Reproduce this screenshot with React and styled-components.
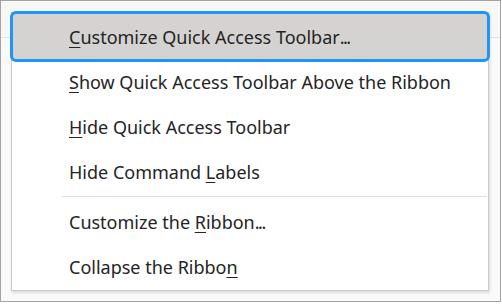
import React from "react";
import styled, { createGlobalStyle } from "styled-components";

const GlobalStyle = createGlobalStyle`
  html, body {
    margin: 0;
    padding: 0;
    background: #ffffff;
  }
`;

const StyledFrame = styled.div`
  box-sizing: border-box;
  width: 501px;
  height: 302px;
  border: 1px solid #a3a3a3;
  background: linear-gradient(
    to bottom,
    #f7f7f7 0px,
    #f7f7f7 36px,
    #e1e1e1 36px,
    #e1e1e1 37px,
    #fafafa 37px
  );
  padding: 11px 0 0 10px;
  font-family: "Noto Sans", "Open Sans", sans-serif;
`;

const StyledMenu = styled.ul`
  box-sizing: border-box;
  list-style: none;
  margin: 0;
  width: 478px;
  padding: 1px 0 1px;
  background: #ffffff;
  border: 1px solid #c9c9c9;
  box-shadow: 1px 2px 3px rgba(0, 0, 0, 0.12);
`;

const StyledItem = styled.li`
  position: relative;
  height: 45px;
  display: flex;
  align-items: center;
  padding-left: 57px;
  font-size: 18px;
  color: #242424;
  cursor: default;

  &::before {
    content: "";
    display: ${(p) => (p.active ? "block" : "none")};
    position: absolute;
    top: -3px;
    bottom: -3px;
    left: -2px;
    right: -2px;
    background: #d5d3d1;
    border: 3px solid #1f95f8;
    border-radius: 6px;
  }

  span {
    position: relative;
  }

  u {
    text-decoration-thickness: 1px;
    text-underline-offset: 3px;
  }
`;

const StyledDots = styled.span`
  letter-spacing: -1.5px;
`;

const StyledSeparator = styled.li`
  height: 5px;
  display: flex;
  align-items: center;
  padding-left: 50px;

  &::after {
    content: "";
    flex: 1;
    height: 1px;
    margin-right: 1px;
    background: #dedede;
  }
`;

const App = () => {
  return (
    <>
      <GlobalStyle />
      <StyledFrame>
        <StyledMenu>
          <StyledItem active>
            <span>
              <u>C</u>ustomize Quick Access Toolbar<StyledDots>...</StyledDots>
            </span>
          </StyledItem>
          <StyledItem>
            <span>
              <u>S</u>how Quick Access Toolbar Above the Ribbon
            </span>
          </StyledItem>
          <StyledItem>
            <span>
              <u>H</u>ide Quick Access Toolbar
            </span>
          </StyledItem>
          <StyledItem>
            <span>
              Hide Command <u>L</u>abels
            </span>
          </StyledItem>
          <StyledSeparator />
          <StyledItem>
            <span>
              Customize the <u>R</u>ibbon<StyledDots>...</StyledDots>
            </span>
          </StyledItem>
          <StyledItem>
            <span>
              Collapse the Ribbo<u>n</u>
            </span>
          </StyledItem>
        </StyledMenu>
      </StyledFrame>
    </>
  );
};

export default App;
